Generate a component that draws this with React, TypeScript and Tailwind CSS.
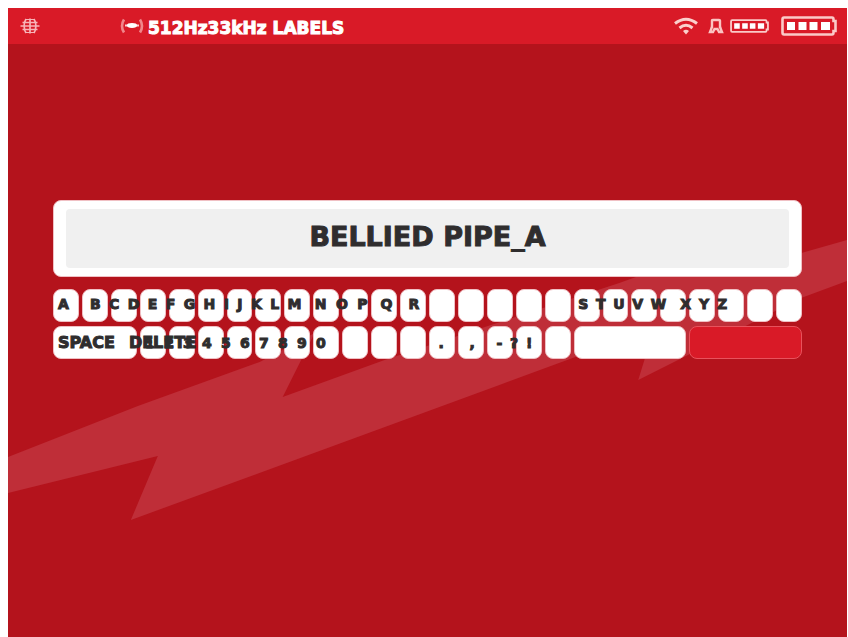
import React from 'react'

// ─── Constants ───────────────────────────────────────────────────────────────
const LETTERS = 'ABCDEFGHIJKLMNOPQRSTUVWXYZ'.split('')
const SYMBOLS = '1234567890.,-?!'.split('')

const KEY_CLS =
  'h-[33px] cursor-pointer rounded-lg border border-[#f0c0c4] bg-white hover:bg-neutral-100'
const LABEL_ROW_CLS =
  'pointer-events-none absolute inset-0 grid items-center font-bold text-[14px] leading-none text-[#2f2d2e] [-webkit-text-stroke:1px_#2f2d2e]'

// ─── Icons ───────────────────────────────────────────────────────────────────
const GlobeIcon: React.FC = () => (
  <svg viewBox="0 0 20 18" className="h-[18px] w-5" fill="none" stroke="#f7b4b8" strokeWidth="1.7" aria-hidden>
    <path d="M10 1.500v15M6 2C3.500 6 3.500 12 6 16M14 2c2.500 4 2.500 10 0 14" />
    <path d="M2.500 5.500h15M0.500 9h19M2.500 12.500h15" />
    <path d="M5.500 2.500h9M5.500 15.500h9" strokeWidth="1.200" />
  </svg>
)

const SignalIcon: React.FC = () => (
  <svg viewBox="0 0 24 16" className="h-4 w-6" fill="none" aria-hidden>
    <path d="M4 1.500Q0 8 4 14.500M20 1.500Q24 8 20 14.500" stroke="#f0868b" strokeWidth="2.600" />
    <path d="M5 7.500h14" stroke="#fbd3d3" strokeWidth="2" />
    <ellipse cx="12" cy="7.500" rx="5" ry="2.400" fill="#fff" />
  </svg>
)

const WifiIcon: React.FC = () => (
  <svg viewBox="0 0 24 18" className="h-[18px] w-6" fill="none" stroke="#fbd0cc" strokeWidth="3" aria-hidden>
    <path d="M1 6.500Q12-2 23 6.500" />
    <path d="M5.500 11Q12 5.500 18.500 11" />
    <path d="M12 17.500l-3-3.500q3-2.500 6 0z" fill="#fbd0cc" stroke="none" />
  </svg>
)

const BeaconIcon: React.FC = () => (
  <svg viewBox="0 0 16 16" className="size-4" fill="none" stroke="#fbc4c2" strokeWidth="2.400" aria-hidden>
    <path d="M4 10V2.500Q4 2 5 2h6q1 0 1 .5V10" />
    <path d="M4 9l-2 5h3l1.500-3h3l1.500 3h3l-2-5" />
  </svg>
)

const BatteryIcon: React.FC<{ className: string }> = ({ className }) => (
  <svg viewBox="0 0 56 20" className={className} fill="none" aria-hidden>
    <path
      d="M3 1.500h48q1.500 0 1.500 2v1.500h2v10h-2v1.500q0 2-1.500 2H3q-1.500 0-1.500-2v-13q0-2 1.500-2z"
      stroke="#fbcac8"
      strokeWidth="2.600"
    />
    <path d="M6 6h8v8H6zM17.500 6h8v8h-8zM28.500 6h8v8h-8zM40 6h9v8h-9z" fill="#fff" />
  </svg>
)

// Lightning bolt behind the keyboard, stretched over the whole screen
const BoltBackground: React.FC = () => (
  <svg
    viewBox="0 0 840 629"
    preserveAspectRatio="none"
    className="absolute inset-0 h-full w-full"
    aria-hidden
  >
    <path
      d="M0 449L130 398L252 354L307 325L275 389L377 352L612 275L732 232L717 267L840 232V273L794 290L631 372L647 320L492 377L123 512L150 448L0 485Z"
      fill="#bf2e38"
    />
  </svg>
)

// ─── Label helpers ───────────────────────────────────────────────────────────
const Spread: React.FC<{ items: string[]; className: string }> = ({ items, className }) => (
  <span className={`row-start-1 flex min-w-0 justify-between ${className}`}>
    {items.map((item) => (
      <span key={item}>{item}</span>
    ))}
  </span>
)

// ─── Main Component ──────────────────────────────────────────────────────────
const App: React.FC = () => {
  const [name, setName] = React.useState('BELLIED PIPE_A')

  const append = (ch: string) => setName((v) => v + ch)
  const removeLast = () => setName((v) => v.slice(0, -1))

  return (
    <div className="flex min-h-screen flex-col bg-white pl-2 pr-px pt-2 font-['DejaVu_Sans',sans-serif]">
      <div className="relative flex flex-1 flex-col bg-[#b4131c]">
        <BoltBackground />

        {/* ── Status bar ─────────────────────────────────────────────────── */}
        <header className="relative flex h-9 items-center justify-between bg-[#d91a27] pl-3 pr-2.5">
          <div className="flex items-center">
            <GlobeIcon />
            <div className="ml-20 flex items-center gap-1">
              <SignalIcon />
              <h1 className="pt-1 text-[17px] font-bold leading-none text-white [-webkit-text-stroke:1px_#fff]">
                512Hz33kHz LABELS
              </h1>
            </div>
          </div>
          <div className="flex items-center">
            <WifiIcon />
            <span className="ml-2.5"><BeaconIcon /></span>
            <BatteryIcon className="ml-1.5 h-[14px] w-[39px]" />
            <BatteryIcon className="ml-3 h-5 w-14" />
          </div>
        </header>

        {/* ── Label editor ───────────────────────────────────────────────── */}
        <main className="relative flex flex-col px-[45px] pt-[156px]">
          <div className="rounded-lg border border-[#f0c0c4] bg-white px-3 py-2">
            <input
              type="text"
              aria-label="Label name"
              value={name}
              onChange={(e) => setName(e.target.value)}
              className="h-[59px] w-full rounded-sm bg-[#f0f0f0] pb-1 text-center text-[27px] font-bold text-[#2f2d2e] outline-none [-webkit-text-stroke:1px_#2f2d2e]"
            />
          </div>

          {/* Letters row: one column per key, captions spread over the keys */}
          <div className="relative mt-3">
            <div className="grid grid-cols-26 gap-[3px]">
              {LETTERS.map((ch) => (
                <button key={ch} type="button" aria-label={ch} onClick={() => append(ch)} className={KEY_CLS} />
              ))}
            </div>
            <div
              aria-hidden
              className={`${LABEL_ROW_CLS} grid-cols-[5fr_32fr_212fr_13fr_53fr_13fr_28fr_156fr_14fr_88fr_14fr_47fr_75fr] pb-1`}
            >
              <Spread items={['A']} className="col-start-2" />
              <Spread items={LETTERS.slice(1, 13)} className="col-start-3" />
              <Spread items={LETTERS.slice(13, 16)} className="col-start-5" />
              <Spread items={['Q']} className="col-start-7" />
              <Spread items={['R']} className="col-start-8" />
              <Spread items={LETTERS.slice(18, 23)} className="col-start-10" />
              <Spread items={LETTERS.slice(23)} className="col-start-12" />
            </div>
          </div>

          {/* Space, digits, punctuation, delete and confirm */}
          <div className="relative mt-1">
            <div className="grid grid-cols-26 gap-[3px]">
              <button type="button" aria-label="Space" onClick={() => append(' ')} className={`${KEY_CLS} col-span-3`} />
              {SYMBOLS.map((ch) => (
                <button key={ch} type="button" aria-label={ch} onClick={() => append(ch)} className={KEY_CLS} />
              ))}
              <button type="button" aria-label="Delete" onClick={removeLast} className={`${KEY_CLS} col-span-4`} />
              <button
                type="button"
                aria-label="Confirm"
                className="col-span-4 h-[33px] cursor-pointer rounded-lg border border-[#e8525c] bg-[#d91a27]"
              />
            </div>
            <div
              aria-hidden
              className={`${LABEL_ROW_CLS} grid-cols-[5fr_71fr_16fr_54fr_127fr_113fr_31fr_27fr_36fr_270fr]`}
            >
              <Spread items={['SPACE']} className="col-start-2 text-[16px]" />
              <Spread items={['DELETE']} className="col-start-3 text-[16px]" />
              <Spread items={SYMBOLS.slice(0, 10)} className="col-start-4 col-end-6" />
              <Spread items={['.']} className="col-start-7" />
              <Spread items={[',']} className="col-start-8" />
              <Spread items={SYMBOLS.slice(12)} className="col-start-9" />
            </div>
          </div>
        </main>
      </div>
    </div>
  )
}

export default App
